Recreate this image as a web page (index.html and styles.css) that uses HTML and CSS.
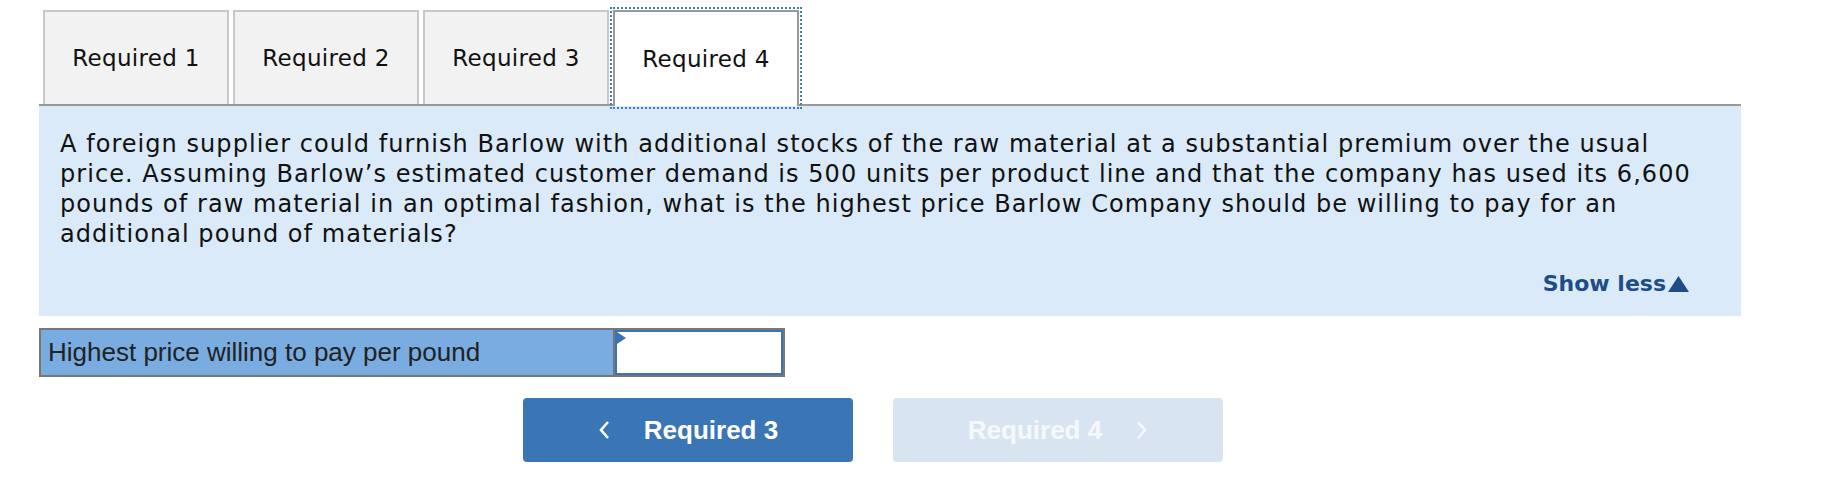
FILE: index.html
```html
<!DOCTYPE html>
<html lang="en">
<head>
    <meta charset="UTF-8">
    <meta name="viewport" content="width=device-width, initial-scale=1.0">
    <title>Required 4</title>
    <link rel="stylesheet" href="styles.css">
</head>
<body>
    <div class="page">
        <!-- タブ -->
        <div class="tab-bar">
            <button class="tab">Required 1</button>
            <button class="tab">Required 2</button>
            <button class="tab">Required 3</button>
            <button class="tab active">Required 4</button>
        </div>

        <!-- 問題文 -->
        <div class="question-panel">
            <p class="question-text">A foreign supplier could furnish Barlow with additional stocks of the raw material at a substantial premium over the usual price. Assuming Barlow’s estimated customer demand is 500 units per product line and that the company has used its 6,600 pounds of raw material in an optimal fashion, what is the highest price Barlow Company should be willing to pay for an additional pound of materials?</p>
            <div class="show-less">
                <a href="#" class="show-less-link">Show less<svg class="show-less-icon" width="21" height="16" viewBox="0 0 21 16"><polygon points="10.5,0 21,16 0,16" fill="currentColor"/></svg></a>
            </div>
        </div>

        <!-- 解答欄 -->
        <div class="answer-row">
            <div class="answer-label">Highest price willing to pay per pound</div>
            <div class="answer-cell">
                <input type="text" class="answer-input">
            </div>
        </div>

        <!-- 前後ボタン -->
        <div class="nav-buttons">
            <button class="nav-button prev">
                <svg class="chevron" width="12" height="20" viewBox="0 0 12 20"><polyline points="10,2 3,10 10,18" fill="none" stroke="currentColor" stroke-width="2.6"/></svg>
                <span>Required 3</span>
            </button>
            <button class="nav-button next" disabled>
                <span>Required 4</span>
                <svg class="chevron" width="12" height="20" viewBox="0 0 12 20"><polyline points="2,2 9,10 2,18" fill="none" stroke="currentColor" stroke-width="2.6"/></svg>
            </button>
        </div>
    </div>
</body>
</html>
```

FILE: styles.css
```css
body {
    margin: 0;
    padding: 0;
    background-color: #ffffff;
    font-family: "DejaVu Sans", Verdana, sans-serif;
    color: #111111;
}

.page {
    width: 1702px;
    margin-left: 39px;
    padding-top: 10px;
}

/* タブ */
.tab-bar {
    display: flex;
    gap: 4px;
    padding-left: 4px;
    border-bottom: 2px solid #999999;
}

.tab {
    width: 186px;
    height: 94px;
    box-sizing: border-box;
    background-color: #f2f2f2;
    border: 2px solid #c8c8c8;
    border-bottom: none;
    font-family: "DejaVu Sans", Verdana, sans-serif;
    font-size: 23px;
    letter-spacing: 0.3px;
    color: #111111;
    padding: 0;
    cursor: pointer;
}

.tab.active {
    height: 96px;
    margin-bottom: -2px;
    background-color: #ffffff;
    border-color: #999999;
    outline: 2px dotted #3d7cc9;
    outline-offset: 1px;
}

/* 問題文 */
.question-panel {
    background-color: #daeaf8;
    padding: 23px 31px 15px 21px;
}

.question-text {
    margin: 0;
    font-size: 24px;
    letter-spacing: 1.05px;
    line-height: 30px;
    color: #111111;
}

.show-less {
    margin-top: 20px;
    padding-right: 21px;
    text-align: right;
    line-height: 30px;
}

.show-less-link {
    font-size: 22px;
    font-weight: bold;
    color: #1d4d88;
    text-decoration: none;
}

.show-less-icon {
    margin-left: 2px;
    vertical-align: -1px;
}

/* 解答欄 */
.answer-row {
    display: flex;
    width: 746px;
    box-sizing: border-box;
    margin-top: 12px;
    border: 2px solid #777777;
}

.answer-label {
    width: 572px;
    height: 45px;
    box-sizing: border-box;
    padding-left: 7px;
    background-color: #79ace0;
    font-family: "Liberation Sans", Arial, sans-serif;
    font-size: 26px;
    line-height: 45px;
    color: #222222;
}

.answer-cell {
    position: relative;
    flex: 1;
    border-left: 2px solid #777777;
}

.answer-cell::before {
    content: "";
    position: absolute;
    left: 2px;
    top: 2px;
    border-top: 6px solid transparent;
    border-bottom: 6px solid transparent;
    border-left: 9px solid #3b74b3;
}

.answer-input {
    display: block;
    width: 100%;
    height: 45px;
    box-sizing: border-box;
    margin: 0;
    border: 2px solid #3b74b3;
    background-color: #ffffff;
    font-size: 22px;
    padding: 0 8px;
    outline: none;
}

/* 前後ボタン */
.nav-buttons {
    display: flex;
    justify-content: center;
    gap: 40px;
    margin-top: 21px;
    padding-right: 34px;
}

.nav-button {
    display: flex;
    align-items: center;
    justify-content: center;
    gap: 34px;
    width: 330px;
    height: 64px;
    border: none;
    border-radius: 4px;
    font-family: "Liberation Sans", Arial, sans-serif;
    font-size: 26px;
    font-weight: bold;
    color: #ffffff;
    cursor: pointer;
}

.nav-button.prev {
    background-color: #3a75b6;
}

.nav-button.next {
    background-color: #d8e4f1;
    color: #f6f9fc;
    cursor: default;
}
```
